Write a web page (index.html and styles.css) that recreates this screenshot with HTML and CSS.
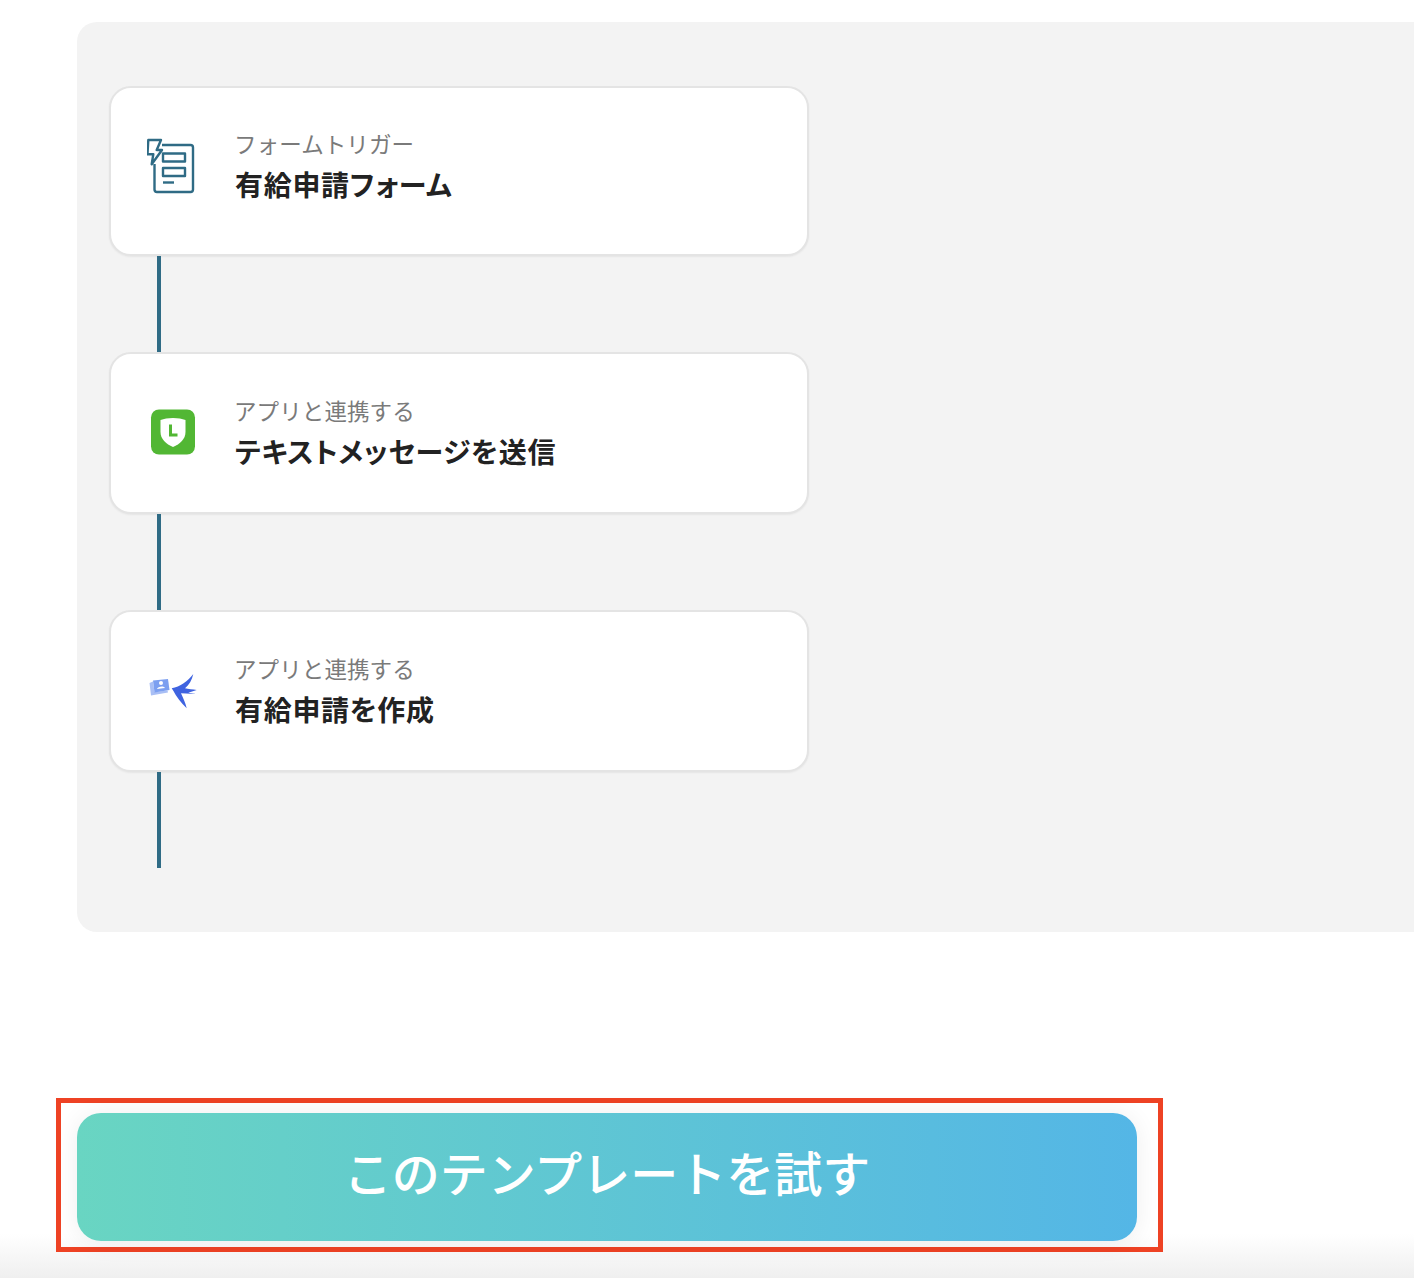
FILE: index.html
```html
<!DOCTYPE html>
<html lang="ja">
<head>
<meta charset="utf-8">
<title>このテンプレートを試す</title>
<link rel="stylesheet" href="styles.css">
</head>
<body>
<div class="page-fade"></div>
<main class="page">
  <section class="flow-panel">
    <article class="step step-tall">
      <div class="step-icon">
        <svg width="52" height="64" viewBox="0 0 52 64" fill="none" stroke="#2f6b85" stroke-width="2.400" stroke-linejoin="round">
          <path d="M15 7H43.500Q46 7 46 9.500V51.500Q46 54 43.500 54H10Q7.500 54 7.500 51.500V26"/>
          <path d="M1.300 2H14L9.700 12H15L4.700 26.300L6.300 16.300H0.500Z" fill="#fff"/>
          <rect x="16" y="15.500" width="22" height="8"/>
          <rect x="16" y="30" width="22" height="8"/>
          <path d="M16 44.500H27"/>
        </svg>
      </div>
      <div class="step-text">
        <p class="step-label">フォームトリガー</p>
        <h2 class="step-title">有給申請フォーム</h2>
      </div>
    </article>
    <div class="connector"></div>
    <article class="step">
      <div class="step-icon">
        <svg width="46" height="46" viewBox="0 0 46 46">
          <rect x="1" y="0.500" width="44" height="45" rx="8" fill="#52b734"/>
          <path d="M23 9C28 9 32 9.800 35.500 11V23C35.500 30 30 35 23 38C16 35 10.500 30 10.500 23V11C14 9.800 18 9 23 9Z" fill="#fff"/>
          <path d="M20.500 15.500V26H27.500" fill="none" stroke="#52b734" stroke-width="3"/>
        </svg>
      </div>
      <div class="step-text">
        <p class="step-label">アプリと連携する</p>
        <h2 class="step-title">テキストメッセージを送信</h2>
      </div>
    </article>
    <div class="connector"></div>
    <article class="step">
      <div class="step-icon">
        <svg width="52" height="38" viewBox="0 0 52 38">
          <path d="M2.500 12L4 24.500L21 21.500L20.500 19.500L7.500 21L6 10.500Z" fill="#a9bff5"/>
          <path d="M6 9.500L21 8L22.500 19L7.500 21.500Z" fill="#7c9ff0"/>
          <circle cx="14" cy="12" r="2" fill="#fff"/>
          <path d="M10 18C10.500 15 17.500 14.500 18 17Z" fill="#fff"/>
          <path d="M24.700 17.300C33 16 41 10 46.300 3C45 9 42 14 38 17.300C41 18 46 18.500 49.700 19L41.300 21.700L49 23L34 22.300C36 27 38.500 32 39.700 37.300C34 32 29 25 26.300 19.700Z" fill="#3f63e0"/>
        </svg>
      </div>
      <div class="step-text">
        <p class="step-label">アプリと連携する</p>
        <h2 class="step-title">有給申請を作成</h2>
      </div>
    </article>
    <div class="connector"></div>
  </section>
  <div class="cta-frame">
    <a class="cta" href="#">このテンプレートを試す</a>
  </div>
</main>
</body>
</html>
```
FILE: styles.css
```css
* { box-sizing: border-box; }
html, body { margin: 0; height: 100%; overflow: hidden; background: #fff; }
body { font-family: "Noto Sans CJK JP", "Noto Sans", sans-serif; color: #222; position: relative; }
.page { position: relative; padding: 22px 0 0 56px; }
.page-fade {
  position: absolute; left: 0; right: 0; bottom: 0; height: 44px;
  background: linear-gradient(to bottom, rgba(239,239,239,0), #efefef);
}
.flow-panel {
  width: 1400px; margin-left: 21px; height: 910px;
  padding: 64px 0 0 32px;
  background: #f3f3f3;
  border-radius: 20px 0 0 20px;
}
.step {
  width: 700px; height: 162px;
  display: flex; align-items: center;
  padding-left: 36px;
  background: #fff;
  border: 2px solid #e4e4e4;
  border-radius: 22px;
  box-shadow: 0 1px 2px rgba(0,0,0,.06);
}
.step-tall { height: 170px; }
.step-icon { width: 52px; margin-right: 36px; margin-top: -2px; display: flex; justify-content: center; flex: none; }
.step-icon svg { display: block; }
.step-text { margin-top: -1px; }
.step-tall .step-text { margin-top: -11px; }
.step-label { margin: 0 0 5px -1px; font-size: 22.500px; line-height: 32px; color: #7a7a7a; font-weight: 400; letter-spacing: .1px; }
.step-title { margin: 0; font-size: 28px; line-height: 40px; font-weight: 700; color: #222; font-feature-settings: "palt"; letter-spacing: .7px; }
.connector { width: 4px; height: 96px; margin-left: 48px; background: #2f6b85; }
.cta-frame {
  width: 1107px; height: 154px; margin-top: 166px;
  padding: 10px 21px 6px 16px;
  border: 5px solid #ee4224;
}
.cta {
  display: flex; align-items: center; justify-content: center;
  height: 128px;
  padding-bottom: 12px;
  border-radius: 24px;
  background: linear-gradient(90deg, #69d5c2, #54b6e6);
  box-shadow: 0 2px 24px rgba(0,0,0,.07);
  color: #fff; font-size: 48px; text-decoration: none; font-weight: 500;
}
```
